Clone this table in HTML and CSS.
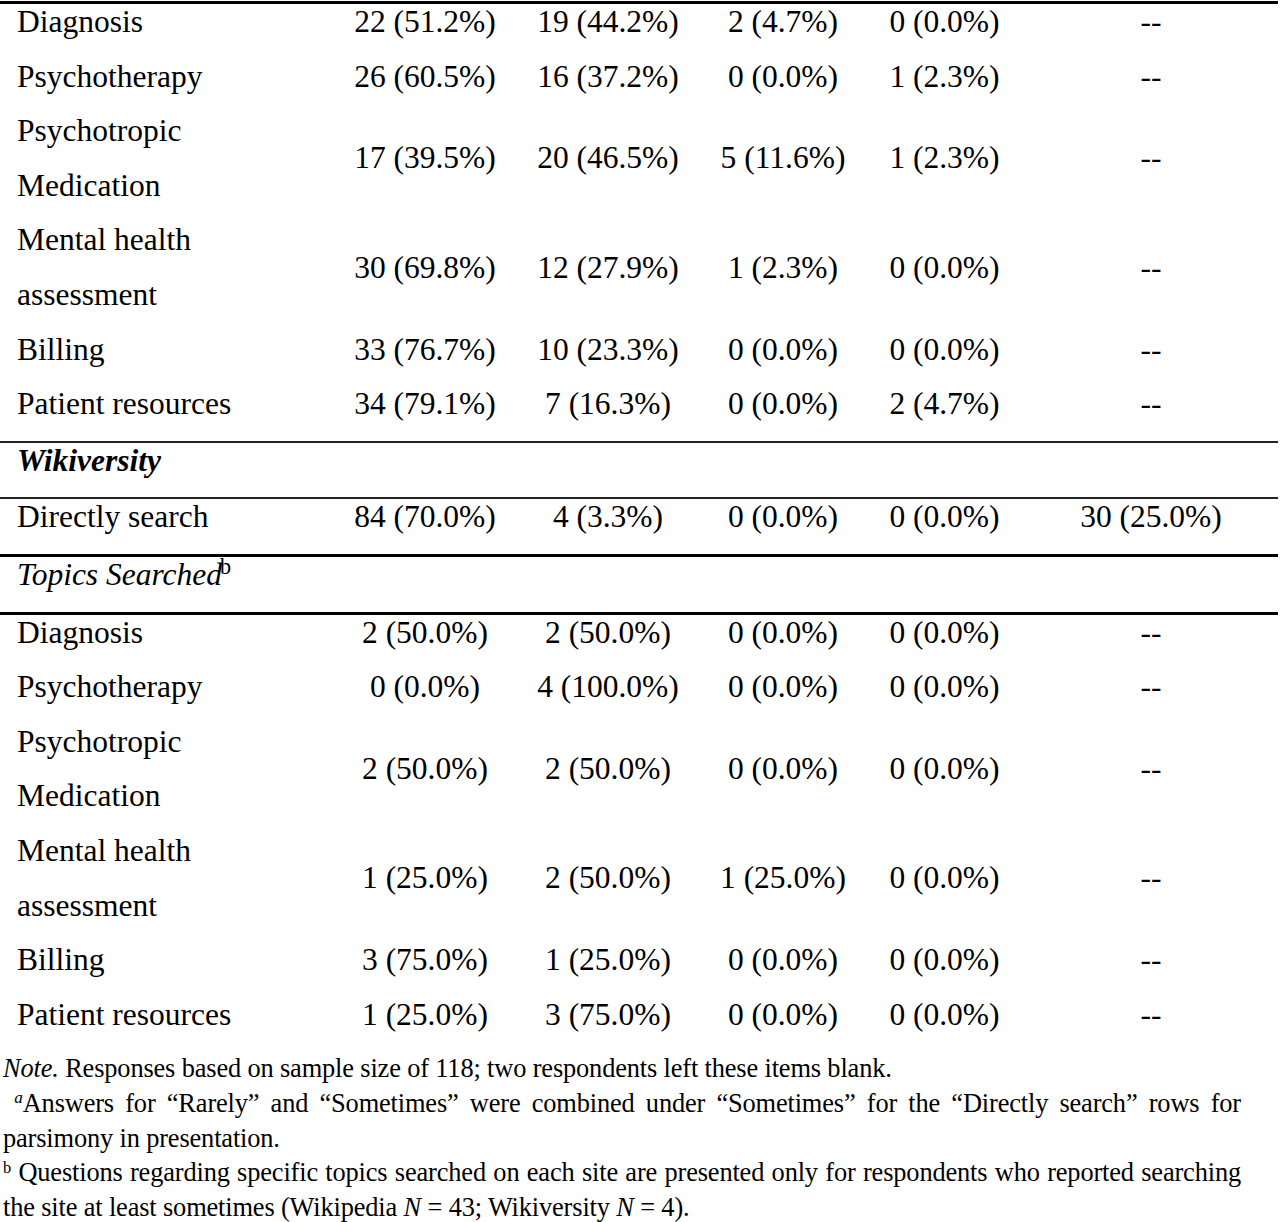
FILE: index.html
```html
<!DOCTYPE html>
<html lang="en">
<head>
<meta charset="utf-8">
<title>Table</title>
<link rel="stylesheet" href="styles.css">
</head>
<body>
<table class="tbl">
  <colgroup>
    <col class="c1"><col class="c2"><col class="c3"><col class="c4"><col class="c5"><col class="c6">
  </colgroup>
  <tbody>
    <tr class="top-thick"><td class="lab"><span class="t">Diagnosis</span></td><td><span class="t">22 (51.2%)</span></td><td><span class="t">19 (44.2%)</span></td><td><span class="t">2 (4.7%)</span></td><td><span class="t">0 (0.0%)</span></td><td class="last"><span class="t">--</span></td></tr>
    <tr><td class="lab"><span class="t">Psychotherapy</span></td><td><span class="t">26 (60.5%)</span></td><td><span class="t">16 (37.2%)</span></td><td><span class="t">0 (0.0%)</span></td><td><span class="t">1 (2.3%)</span></td><td class="last"><span class="t">--</span></td></tr>
    <tr><td class="lab"><span class="t">Psychotropic Medication</span></td><td><span class="t">17 (39.5%)</span></td><td><span class="t">20 (46.5%)</span></td><td><span class="t">5 (11.6%)</span></td><td><span class="t">1 (2.3%)</span></td><td class="last"><span class="t">--</span></td></tr>
    <tr><td class="lab"><span class="t">Mental health assessment</span></td><td><span class="t">30 (69.8%)</span></td><td><span class="t">12 (27.9%)</span></td><td><span class="t">1 (2.3%)</span></td><td><span class="t">0 (0.0%)</span></td><td class="last"><span class="t">--</span></td></tr>
    <tr><td class="lab"><span class="t">Billing</span></td><td><span class="t">33 (76.7%)</span></td><td><span class="t">10 (23.3%)</span></td><td><span class="t">0 (0.0%)</span></td><td><span class="t">0 (0.0%)</span></td><td class="last"><span class="t">--</span></td></tr>
    <tr><td class="lab"><span class="t">Patient resources</span></td><td><span class="t">34 (79.1%)</span></td><td><span class="t">7 (16.3%)</span></td><td><span class="t">0 (0.0%)</span></td><td><span class="t">2 (4.7%)</span></td><td class="last"><span class="t">--</span></td></tr>
    <tr class="top-thin"><td class="lab section" colspan="6"><span class="t"><b><i>Wikiversity</i></b></span></td></tr>
    <tr class="top-thin"><td class="lab"><span class="t">Directly search</span></td><td><span class="t">84 (70.0%)</span></td><td><span class="t">4 (3.3%)</span></td><td><span class="t">0 (0.0%)</span></td><td><span class="t">0 (0.0%)</span></td><td class="last"><span class="t">30 (25.0%)</span></td></tr>
    <tr class="top-thick"><td class="lab section" colspan="6"><span class="t"><i>Topics Searched</i><sup class="fn fb">b</sup></span></td></tr>
    <tr class="top-thick"><td class="lab"><span class="t">Diagnosis</span></td><td><span class="t">2 (50.0%)</span></td><td><span class="t">2 (50.0%)</span></td><td><span class="t">0 (0.0%)</span></td><td><span class="t">0 (0.0%)</span></td><td class="last"><span class="t">--</span></td></tr>
    <tr><td class="lab"><span class="t">Psychotherapy</span></td><td><span class="t">0 (0.0%)</span></td><td><span class="t">4 (100.0%)</span></td><td><span class="t">0 (0.0%)</span></td><td><span class="t">0 (0.0%)</span></td><td class="last"><span class="t">--</span></td></tr>
    <tr><td class="lab"><span class="t">Psychotropic Medication</span></td><td><span class="t">2 (50.0%)</span></td><td><span class="t">2 (50.0%)</span></td><td><span class="t">0 (0.0%)</span></td><td><span class="t">0 (0.0%)</span></td><td class="last"><span class="t">--</span></td></tr>
    <tr><td class="lab"><span class="t">Mental health assessment</span></td><td><span class="t">1 (25.0%)</span></td><td><span class="t">2 (50.0%)</span></td><td><span class="t">1 (25.0%)</span></td><td><span class="t">0 (0.0%)</span></td><td class="last"><span class="t">--</span></td></tr>
    <tr><td class="lab"><span class="t">Billing</span></td><td><span class="t">3 (75.0%)</span></td><td><span class="t">1 (25.0%)</span></td><td><span class="t">0 (0.0%)</span></td><td><span class="t">0 (0.0%)</span></td><td class="last"><span class="t">--</span></td></tr>
    <tr><td class="lab"><span class="t">Patient resources</span></td><td><span class="t">1 (25.0%)</span></td><td><span class="t">3 (75.0%)</span></td><td><span class="t">0 (0.0%)</span></td><td><span class="t">0 (0.0%)</span></td><td class="last"><span class="t">--</span></td></tr>
  </tbody>
</table>
<div class="notes">
  <p class="note"><i>Note.</i> Responses based on sample size of 118; two respondents left these items blank.</p>
  <p class="note justify">&nbsp;<sup class="fn fa"><i>a</i></sup>Answers for “Rarely” and “Sometimes” were combined under “Sometimes” for the “Directly search” rows for parsimony in presentation.</p>
  <p class="note justify"><sup class="fn">b</sup> Questions regarding specific topics searched on each site are presented only for respondents who reported searching the site at least sometimes (Wikipedia <i>N</i> = 43; Wikiversity <i>N</i> = 4).</p>
</div>
</body>
</html>
```

FILE: styles.css
```css
html, body {
  margin: 0;
  padding: 0;
  background: #ffffff;
  color: #000000;
  font-family: "Liberation Serif", "Times New Roman", serif;
}

body {
  width: 1280px;
  padding-top: 1px;
}

.tbl {
  width: 1278px;
  table-layout: fixed;
  border-collapse: separate;
  border-spacing: 0;
  font-size: 31.5px;
  line-height: 54.6px;
}

.c1 { width: 340px; }
.c2 { width: 170px; }
.c3 { width: 196px; }
.c4 { width: 154px; }
.c5 { width: 169px; }
.c6 { width: 249px; }

.tbl td {
  padding: 0;
  text-align: center;
  vertical-align: middle;
  white-space: nowrap;
}

.tbl td.lab {
  text-align: left;
  padding-left: 17px;
  padding-right: 70px;
  white-space: normal;
}

.tbl td.section {
  padding-right: 0;
}

.tbl td.last {
  padding-right: 5px;
}

.t {
  line-height: 36px;
  vertical-align: 9px;
}

.top-thick td {
  border-top: 3px solid #000;
}

.top-thin td {
  border-top: 2px solid #222;
}

.fn {
  font-size: 0.62em;
  line-height: 0;
  vertical-align: 0.5em;
}

.fb {
  font-size: 0.7em;
  margin-left: -2px;
}

.notes {
  width: 1238px;
  padding-left: 3px;
  font-size: 26.4px;
  letter-spacing: -0.15px;
  line-height: 34.7px;
}

.note {
  margin: 0;
}

.justify {
  text-align: justify;
}

.fa {
  font-size: 0.65em;
}
```
